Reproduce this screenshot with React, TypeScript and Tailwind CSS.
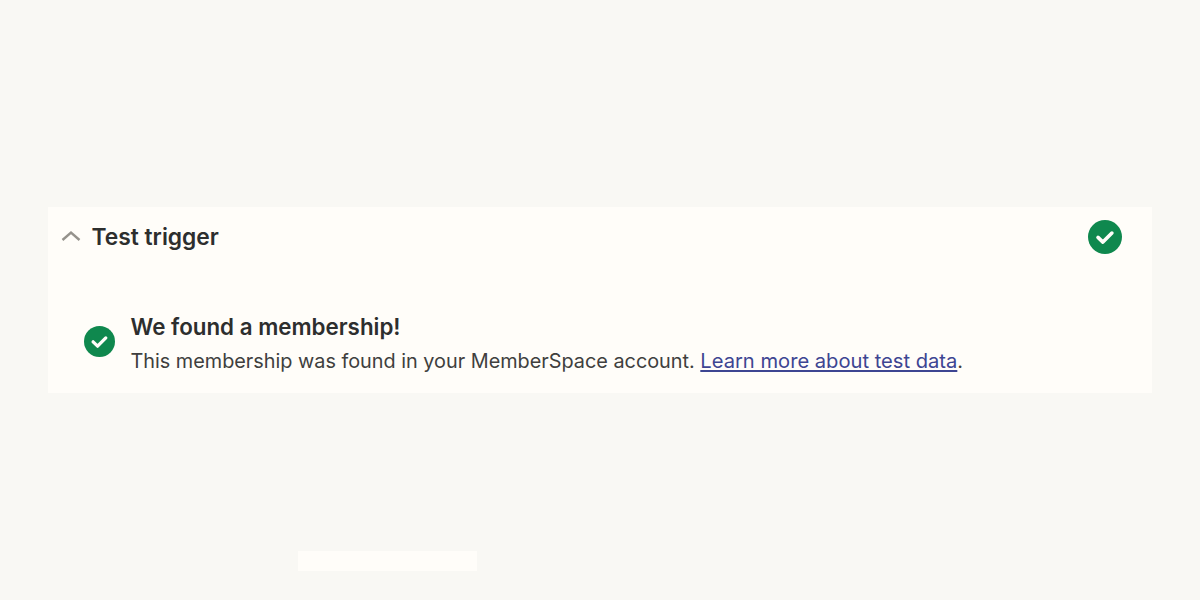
const font = { fontFamily: '"Inter", "Liberation Sans", sans-serif' };

function CheckBadge({ className }: { className: string }) {
  return (
    <svg viewBox="0 0 34 34" className={className}>
      <circle cx="17" cy="17" r="17" fill="#0f884e" />
      <path
        d="M10 17.400l4.900 4.700 9-9"
        fill="none"
        stroke="#fffdf9"
        strokeWidth="3.600"
        strokeLinecap="round"
        strokeLinejoin="round"
      />
    </svg>
  );
}

export default function App() {
  return (
    <div style={font} className="h-[600px] w-[1200px] overflow-hidden bg-[#f9f8f4] pt-[207px]">
      <section className="mx-[48px] h-[186px] bg-[#fffdf9]">
        <div className="flex h-[60px] items-center pl-[12px] pr-[30px]">
          <svg viewBox="0 0 20 12" className="h-[12px] w-[20px] translate-x-[1px] -translate-y-[1px]">
            <path d="M1.500 10L10 2.500 18.500 10" fill="none" stroke="#95928c" strokeWidth="2.400" strokeLinejoin="miter" />
          </svg>
          <h2 className="ml-[11.500px] text-[22.800px] font-semibold leading-[30px] text-[#2d2e2e]">Test trigger</h2>
          <CheckBadge className="ml-auto h-[34px] w-[34px]" />
        </div>
        <div className="mt-[45px] flex items-start pl-[36px]">
          <CheckBadge className="mt-[14px] h-[31px] w-[31px]" />
          <div className="ml-[15.500px]">
            <h3 className="text-[22.350px] font-semibold leading-[30px] text-[#2d2e2e]">We found a membership!</h3>
            <p className="mt-[5px] text-[19.830px] leading-[28px] text-[#403f3e]">
              This membership was found in your MemberSpace account.{' '}
              <a href="#" className="text-[20.150px] text-[#3d4592] underline">Learn more about test data</a>.
            </p>
          </div>
        </div>
      </section>
      <div className="ml-[298px] mt-[158px] h-[20px] w-[179px] bg-[#fffdf9]" />
    </div>
  );
}
